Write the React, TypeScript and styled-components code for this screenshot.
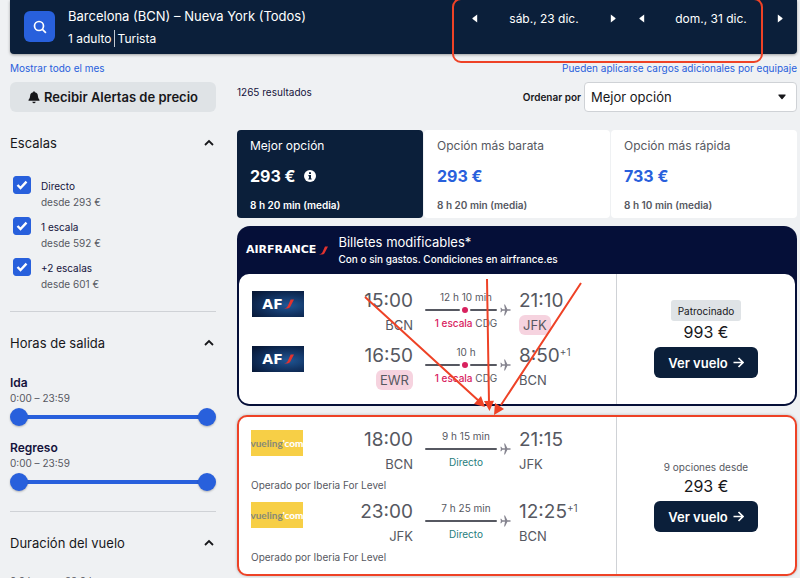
import React, { useState } from "react";
import styled, { createGlobalStyle, css } from "styled-components";

const color = {
  page: "#eff1f3",
  navy: "#0b1f3a",
  partner: "#050f38",
  blue: "#2860dc",
  ink: "#17171a",
  indigo: "#15133c",
  text: "#565861",
  pink: "#d8215e",
  blush: "#f6d3df",
  teal: "#1f7d7d",
  chip: "#dfe3e6",
  line: "#cfd2d6",
  mark: "#ee4226",
};

const GlobalStyle = createGlobalStyle`
  *, *::before, *::after { box-sizing: border-box; }
  body {
    margin: 0;
    background: ${color.page};
    color: ${color.ink};
    font-family: Inter, "Liberation Sans", sans-serif;
    font-size: 10px;
    line-height: 16px;
  }
  button, input, select { font: inherit; color: inherit; margin: 0; }
  h1, h2, h3, p, ul, fieldset { margin: 0; padding: 0; border: 0; list-style: none; font-weight: 400; }
`;

const Page = styled.div`
  position: relative;
  height: 100vh;
  overflow: hidden;
  padding: 0 3px 0 10px;
`;

const SearchBar = styled.header`
  display: flex;
  justify-content: space-between;
  height: 54px;
  padding: 0 12px 0 14px;
  background: ${color.navy};
  color: #fff;
  border-radius: 0 0 4px 4px;
  box-shadow: 0 1px 3px rgba(0, 0, 0, 0.35);
`;

const SearchSummary = styled.div`
  display: flex;
  gap: 13px;
`;

const SearchButton = styled.button`
  display: grid;
  place-items: center;
  width: 31px;
  height: 31px;
  margin-top: 11px;
  padding: 0;
  border: 0;
  border-radius: 6px;
  background: ${color.blue};
  color: #fff;
`;

const Route = styled.h1`
  margin-top: 6px;
  font-size: 13px;
  line-height: 20px;
`;

const Passengers = styled.p`
  display: flex;
  margin-top: 4px;
  font-size: 12px;
  line-height: 17px;
`;

const Cabin = styled.span`
  margin-left: 2px;
  padding-left: 3px;
  border-left: 1px solid #c4cad3;
`;

const Dates = styled.div`
  position: relative;
  display: flex;
  gap: 19px;
  height: 37px;
`;

const DateStepper = styled.div`
  display: flex;
  align-items: center;
  justify-content: space-between;
  width: 148px;
  font-size: 12px;
`;

const StepButton = styled.button`
  display: grid;
  place-items: center;
  width: 10px;
  height: 20px;
  padding: 0;
  border: 0;
  background: none;
  color: #fff;
`;

const DatesHighlight = styled.div`
  position: absolute;
  top: -2px;
  left: -18px;
  right: 22px;
  height: 65px;
  border: 2px solid ${color.mark};
  border-radius: 9px;
  pointer-events: none;
`;

const Links = styled.nav`
  display: flex;
  justify-content: space-between;
  padding: 6px 0;
`;

const TextLink = styled.a`
  color: ${color.blue};
  text-decoration: none;
`;

const Columns = styled.div`
  display: grid;
  grid-template-columns: 206px minmax(0, 1fr);
  column-gap: 21px;
  align-items: start;
`;

const AlertButton = styled.button`
  display: flex;
  align-items: center;
  justify-content: center;
  gap: 4px;
  width: 100%;
  height: 30px;
  border: 0;
  border-radius: 6px;
  background: ${color.chip};
  font-size: 13px;
  font-weight: 600;
  white-space: nowrap;
`;

const FilterSection = styled.section`
  padding: 21px 0 20px;
  border-bottom: 1px solid ${color.line};
`;

const FilterToggle = styled.button`
  display: flex;
  align-items: center;
  justify-content: space-between;
  width: 100%;
  padding: 0 2px 0 0;
  border: 0;
  background: none;
  font-size: 13px;
  line-height: 20px;
  text-align: left;
`;

const StopList = styled.ul`
  padding: 23px 0 0 3px;
  margin-bottom: -8px;
`;

const StopItem = styled.li`
  display: grid;
  grid-template-columns: 18px 1fr;
  column-gap: 10px;
  height: 41px;
`;

const CheckCell = styled.span`
  display: grid;
  width: 18px;
  height: 18px;
  > * { grid-area: 1 / 1; }
  svg { place-self: center; pointer-events: none; }
`;

const Check = styled.input`
  appearance: none;
  width: 18px;
  height: 18px;
  border: 1px solid ${color.blue};
  border-radius: 3px;
  background: #fff;
  &:checked { background: ${color.blue}; }
`;

const StopLabel = styled.label`
  padding-top: 2px;
  color: ${color.indigo};
`;

const Muted = styled.span`
  display: block;
  color: ${color.text};
`;

const RangeGroup = styled.fieldset`
  padding: 22px 0 0;
  & + & { padding-top: 14px; }
  legend { float: left; width: 100%; padding: 0; color: ${color.indigo}; font-size: 12px; font-weight: 600; line-height: 16px; }
`;

const RangeText = styled.p`
  clear: both;
  color: ${color.text};
  line-height: 15px;
`;

const RangeTrack = styled.div`
  display: grid;
  align-items: center;
  height: 18px;
  margin-top: 2px;
  background: linear-gradient(${color.blue}, ${color.blue}) center / calc(100% - 18px) 4px no-repeat;
`;

const RangeInput = styled.input`
  grid-area: 1 / 1;
  appearance: none;
  width: 100%;
  height: 18px;
  background: none;
  pointer-events: none;
  &::-webkit-slider-thumb {
    appearance: none;
    width: 18px;
    height: 18px;
    border-radius: 50%;
    background: ${color.blue};
    box-shadow: 0 1px 2px rgba(0, 0, 0, 0.25);
    pointer-events: auto;
  }
`;

const DurationText = styled.p`
  padding-top: 20px;
  color: ${color.text};
`;

const Toolbar = styled.div`
  display: flex;
  justify-content: space-between;
  margin-bottom: 18px;
`;

const ResultCount = styled.p`
  padding-top: 2px;
  color: ${color.indigo};
`;

const Sorting = styled.div`
  display: flex;
  align-items: center;
  gap: 3px;
  label { font-weight: 600; }
`;

const SelectBox = styled.div`
  display: grid;
  align-items: center;
  width: 213px;
  > * { grid-area: 1 / 1; }
  svg { justify-self: end; margin-right: 11px; pointer-events: none; }
`;

const Select = styled.select`
  appearance: none;
  width: 100%;
  height: 30px;
  padding: 0 6px;
  border: 1px solid ${color.line};
  border-radius: 4px;
  background: #fff;
  font-size: 13px;
`;

const Tabs = styled.div`
  display: grid;
  grid-template-columns: repeat(3, minmax(0, 1fr));
  column-gap: 1px;
  margin-bottom: 8px;
`;

const Tab = styled.button<{ $active?: boolean }>`
  height: 88px;
  padding: 6px 13px 5px;
  border: 0;
  border-radius: 4px;
  background: ${(p) => (p.$active ? color.navy : "#fff")};
  color: ${(p) => (p.$active ? "#fff" : color.text)};
  text-align: left;
`;

const TabName = styled.span`
  display: block;
  font-size: 12px;
  line-height: 20px;
`;

const TabPrice = styled.span<{ $active?: boolean }>`
  display: flex;
  align-items: center;
  gap: 8px;
  padding: 9px 0 10px;
  color: ${(p) => (p.$active ? "#fff" : color.blue)};
  font-size: 16px;
  font-weight: 700;
  line-height: 22px;
`;

const TabTime = styled.span`
  display: block;
  font-size: 10px;
  font-weight: 600;
  line-height: 16px;
`;

const PartnerCard = styled.article`
  padding: 0 2px 2px;
  border-radius: 13px;
  background: ${color.partner};
  margin-bottom: 9px;
`;

const PartnerHeader = styled.div`
  display: flex;
  align-items: center;
  gap: 10px;
  height: 48px;
  padding: 0 7px;
  color: #fff;
`;

const PartnerBrand = styled.span`
  display: flex;
  align-items: center;
  gap: 3px;
  font: 700 11px/16px "DejaVu Sans", sans-serif;
`;

const PartnerTitle = styled.h2`
  font-size: 13px;
  line-height: 18px;
`;

const PartnerNote = styled.p`
  font-size: 10px;
  font-weight: 500;
`;

const FlightCard = styled.article<{ $marked?: boolean }>`
  display: grid;
  grid-template-columns: minmax(0, 1fr) 178px;
  background: #fff;
  border-radius: 10px;
  ${(p) =>
    p.$marked &&
    css`
      border: 2px solid ${color.mark};
      box-shadow: 0 0 3px rgba(0, 0, 0, 0.25);
    `}
`;

const Legs = styled.div<{ $compact?: boolean }>`
  display: grid;
  row-gap: ${(p) => (p.$compact ? 7 : 9)}px;
  padding: ${(p) => (p.$compact ? "11px 12px 9px" : "15px 12px 14px 13px")};
  border-right: 1px solid ${color.line};
`;

const LegRow = styled.div`
  display: grid;
  grid-template-columns: 52px minmax(0, 1fr) 86px 93px;
`;

const Stop = styled.div<{ $end?: boolean }>`
  display: flex;
  flex-direction: column;
  align-items: ${(p) => (p.$end ? "flex-end" : "flex-start")};
  padding: ${(p) => (p.$end ? "0 12px 0 0" : "0 0 0 8px")};
`;

const Time = styled.span`
  display: flex;
  color: ${color.text};
  font-size: 19px;
  line-height: 24px;
  sup { font-size: 10px; line-height: 16px; }
`;

const Airport = styled.span<{ $changed?: boolean }>`
  color: ${color.text};
  font-size: 13px;
  line-height: 20px;
  margin-top: 2px;
  ${(p) =>
    p.$changed &&
    css`
      padding: 0 4px;
      border-radius: 6px;
      background: ${color.blush};
    `}
`;

const Path = styled.div`
  display: flex;
  flex-direction: column;
  color: ${color.text};
  font-size: 10px;
`;

const PathText = styled.span<{ $direct?: boolean }>`
  width: 82px;
  text-align: center;
  line-height: 16px;
  white-space: nowrap;
  color: ${(p) => (p.$direct ? color.teal : color.text)};
  em { color: ${color.pink}; font-style: normal; font-weight: 500; }
`;

const PathLine = styled.div`
  display: flex;
  align-items: center;
  gap: 3px;
  height: 10px;
`;

const Stroke = styled.span`
  flex: 1;
  height: 2px;
  border-radius: 1px;
  background: ${color.text};
`;

const Dot = styled.span`
  width: 6px;
  height: 6px;
  border-radius: 50%;
  background: ${color.pink};
`;

const Track = styled.span`
  display: flex;
  flex: 1;
  align-items: center;
  gap: 2px;
`;

const ShortStroke = styled(Stroke)`
  flex: 0 0 27px;
`;

const Operator = styled.p`
  grid-column: 1 / -1;
  padding-top: 3px;
  font-size: 10px;
  color: ${color.text};
`;

const LogoCell = styled.div`
  padding-top: 2px;
`;

const AirlineTile = styled.div<{ $brand: "af" | "vueling" }>`
  display: flex;
  align-items: center;
  justify-content: center;
  gap: 1px;
  height: 26px;
  overflow: hidden;
  white-space: nowrap;
  ${(p) =>
    p.$brand === "af"
      ? css`
          background: radial-gradient(ellipse at 68% 55%, #205796 0%, #123464 45%, #071837 90%);
          color: #fff;
          font: 700 14px/16px "DejaVu Sans", sans-serif;
        `
      : css`
          background: #f7cf46;
          color: #878a78;
          font: 700 10px/16px Lato, sans-serif;
          gap: 0;
          b { color: #fff; }
        `}
`;

const Offer = styled.div`
  display: flex;
  flex-direction: column;
  align-items: center;
  justify-content: center;
`;

const Badge = styled.span`
  padding: 3px 7px 2px;
  border-radius: 3px;
  background: ${color.chip};
  font-size: 10px;
`;

const OfferNote = styled.span`
  color: ${color.text};
  font-size: 10px;
`;

const OfferPrice = styled.span`
  margin-bottom: 4px;
  font-size: 16px;
  line-height: 22px;
`;

const ViewButton = styled.button`
  display: flex;
  align-items: center;
  gap: 5px;
  height: 31px;
  padding: 0 14px;
  border: 0;
  border-radius: 6px;
  background: ${color.navy};
  color: #fff;
  font-size: 13px;
  font-weight: 600;
  white-space: nowrap;
`;

const ArrowLayer = styled.svg`
  position: absolute;
  top: 0;
  left: 0;
  pointer-events: none;
`;

const Triangle = ({ dir }: { dir: "left" | "right" }) => (
  <svg width="6" height="9" viewBox="0 0 6 9" fill="currentColor" aria-hidden="true">
    <path d={dir === "left" ? "M5.2 .5v8L.6 4.9q-.4-.4 0-.8z" : "M.8 .5v8l4.600-3.600q.4-.4 0-.8z"} />
  </svg>
);

const Chevron = () => (
  <svg width="10" height="8" viewBox="0 0 10 8" fill="none" stroke="currentColor" strokeWidth="1.8" aria-hidden="true">
    <path d="M1 6l4-4 4 4" />
  </svg>
);

const Plane = () => (
  <svg width="11" height="12" viewBox="0 0 11 12" fill="#85848f" aria-hidden="true">
    <path d="M4.100 .6h.9l2.400 4.700h2.200q1.200.1 1.300.7-.1.600-1.300.7H7.400L5 11.400h-.9l.9-4.700H2.400L1.200 8.300H.4L.9 6 .4 3.700h.8l1.200 1.600H5z" />
  </svg>
);

const Slash = ({ size }: { size: number }) => (
  <svg width={size} height={size} viewBox="0 0 9 9" fill="#e2332f" aria-hidden="true">
    <path d="M0 8.500Q2.500 8 3.300 6.500L6 .5h3L5.500 7.200Q4.700 8.500 3 8.500z" />
  </svg>
);

interface Leg {
  depart: string;
  from: string;
  arrive: string;
  to: string;
  duration: string;
  via?: string;
  nextDay?: boolean;
  fromChanged?: boolean;
  toChanged?: boolean;
  operator?: string;
}

function LegView({ leg, brand }: { leg: Leg; brand: "af" | "vueling" }) {
  return (
    <LegRow>
      <LogoCell>
        {brand === "af" ? (
          <AirlineTile $brand="af">AF<Slash size={10} /></AirlineTile>
        ) : (
          <AirlineTile $brand="vueling">vueling<b>'com</b></AirlineTile>
        )}
      </LogoCell>
      <Stop $end>
        <Time>{leg.depart}</Time>
        <Airport $changed={leg.fromChanged}>{leg.from}</Airport>
      </Stop>
      <Path>
        <PathText>{leg.duration}</PathText>
        <PathLine>
          <Track>
            <Stroke />
            {leg.via && <><Dot /><ShortStroke /></>}
          </Track>
          <Plane />
        </PathLine>
        {leg.via ? (
          <PathText><em>1 escala</em> {leg.via}</PathText>
        ) : (
          <PathText $direct>Directo</PathText>
        )}
      </Path>
      <Stop>
        <Time>{leg.arrive}{leg.nextDay && <sup>+1</sup>}</Time>
        <Airport $changed={leg.toChanged}>{leg.to}</Airport>
      </Stop>
      {leg.operator && <Operator>{leg.operator}</Operator>}
    </LegRow>
  );
}

const partnerLegs: Leg[] = [
  { depart: "15:00", from: "BCN", arrive: "21:10", to: "JFK", duration: "12 h 10 min", via: "CDG", toChanged: true },
  { depart: "16:50", from: "EWR", arrive: "8:50", to: "BCN", duration: "10 h", via: "CDG", nextDay: true, fromChanged: true },
];

const vuelingLegs: Leg[] = [
  { depart: "18:00", from: "BCN", arrive: "21:15", to: "JFK", duration: "9 h 15 min", operator: "Operado por Iberia For Level" },
  { depart: "23:00", from: "JFK", arrive: "12:25", to: "BCN", duration: "7 h 25 min", nextDay: true, operator: "Operado por Iberia For Level" },
];

const stops = [
  { id: "direct", name: "Directo", price: "desde 293 €" },
  { id: "one", name: "1 escala", price: "desde 592 €" },
  { id: "two", name: "+2 escalas", price: "desde 601 €" },
];

const options = [
  { name: "Mejor opción", price: "293 €", time: "8 h 20 min (media)" },
  { name: "Opción más barata", price: "293 €", time: "8 h 20 min (media)" },
  { name: "Opción más rápida", price: "733 €", time: "8 h 10 min (media)" },
];

function DateControl({ label }: { label: string }) {
  return (
    <DateStepper>
      <StepButton aria-label="Día anterior"><Triangle dir="left" /></StepButton>
      <span>{label}</span>
      <StepButton aria-label="Día siguiente"><Triangle dir="right" /></StepButton>
    </DateStepper>
  );
}

function HoursRange({ name }: { name: string }) {
  return (
    <RangeGroup>
      <legend>{name}</legend>
      <RangeText>0:00 – 23:59</RangeText>
      <RangeTrack>
        <RangeInput type="range" min={0} max={1439} defaultValue={0} aria-label={`${name}: desde`} />
        <RangeInput type="range" min={0} max={1439} defaultValue={1439} aria-label={`${name}: hasta`} />
      </RangeTrack>
    </RangeGroup>
  );
}

function OfferAction() {
  return (
    <ViewButton>
      Ver vuelo
      <svg width="11" height="11" viewBox="0 0 11 11" fill="none" stroke="currentColor" strokeWidth="1.700" aria-hidden="true">
        <path d="M.5 5.500h9M5.500 1l4.500 4.500L5.500 10" />
      </svg>
    </ViewButton>
  );
}

export default function App() {
  const [active, setActive] = useState(0);
  return (
    <Page>
      <GlobalStyle />
      <SearchBar>
        <SearchSummary>
          <SearchButton aria-label="Buscar">
            <svg width="14" height="14" viewBox="0 0 14 14" fill="none" stroke="currentColor" strokeWidth="1.700" aria-hidden="true">
              <circle cx="6" cy="6" r="4.500" />
              <path d="M9.200 9.200l3.700 3.700" />
            </svg>
          </SearchButton>
          <div>
            <Route>Barcelona (BCN) – Nueva York (Todos)</Route>
            <Passengers>1 adulto<Cabin>Turista</Cabin></Passengers>
          </div>
        </SearchSummary>
        <Dates>
          <DateControl label="sáb., 23 dic." />
          <DateControl label="dom., 31 dic." />
          <DatesHighlight />
        </Dates>
      </SearchBar>
      <Links>
        <TextLink href="#mes">Mostrar todo el mes</TextLink>
        <TextLink href="#equipaje">Pueden aplicarse cargos adicionales por equipaje</TextLink>
      </Links>
      <Columns>
        <aside>
          <AlertButton>
            <svg width="12" height="13" viewBox="0 0 12 13" fill="currentColor" aria-hidden="true">
              <path d="M6 .3q.8 0 .9.9Q9.800 1.800 9.900 5q.1 2.600 1.500 3.700.6.8-.3 1.100H.9q-.9-.3-.3-1.100Q2 7.600 2.100 5q.1-3.200 3-3.800Q5.200.3 6 .3zM4.300 10.700h3.400Q7.400 12.300 6 12.300t-1.700-1.600z" />
            </svg>
            Recibir Alertas de precio
          </AlertButton>
          <FilterSection>
            <FilterToggle aria-expanded>Escalas<Chevron /></FilterToggle>
            <StopList>
              {stops.map((s) => (
                <StopItem key={s.id}>
                  <CheckCell>
                    <Check type="checkbox" id={s.id} defaultChecked />
                    <svg width="12" height="10" viewBox="0 0 12 10" fill="none" stroke="#fff" strokeWidth="2.400" aria-hidden="true">
                      <path d="M1.500 5l3 3 6-6.300" />
                    </svg>
                  </CheckCell>
                  <StopLabel htmlFor={s.id}>{s.name}<Muted>{s.price}</Muted></StopLabel>
                </StopItem>
              ))}
            </StopList>
          </FilterSection>
          <FilterSection>
            <FilterToggle aria-expanded>Horas de salida<Chevron /></FilterToggle>
            <HoursRange name="Ida" />
            <HoursRange name="Regreso" />
          </FilterSection>
          <FilterSection>
            <FilterToggle aria-expanded>Duración del vuelo<Chevron /></FilterToggle>
            <DurationText>0,0 horas – 22,0 h</DurationText>
          </FilterSection>
        </aside>
        <main>
          <Toolbar>
            <ResultCount>1265 resultados</ResultCount>
            <Sorting>
              <label htmlFor="sort">Ordenar por</label>
              <SelectBox>
                <Select id="sort" defaultValue="Mejor opción">
                  {options.map((o) => <option key={o.name}>{o.name}</option>)}
                </Select>
                <svg width="8" height="6" viewBox="0 0 8 6" fill="currentColor" aria-hidden="true">
                  <path d="M.8.500h6.400q.8.300.3.900L4.500 5q-.5.500-1 0L.500 1.400Q0 .8.800.5z" />
                </svg>
              </SelectBox>
            </Sorting>
          </Toolbar>
          <Tabs>
            {options.map((o, i) => (
              <Tab key={o.name} $active={i === active} onClick={() => setActive(i)}>
                <TabName>{o.name}</TabName>
                <TabPrice $active={i === active}>
                  {o.price}
                  {i === active && (
                    <svg width="12" height="12" viewBox="0 0 12 12" aria-hidden="true">
                      <circle cx="6" cy="6" r="6" fill="#fff" />
                      <path d="M5 2.300h2v1.800H5zM4.400 5H7v3.400h.7v1.200H4.300V8.400H5V6.200h-.6z" fill={color.navy} />
                    </svg>
                  )}
                </TabPrice>
                <TabTime>{o.time}</TabTime>
              </Tab>
            ))}
          </Tabs>
          <PartnerCard>
            <PartnerHeader>
              <PartnerBrand>AIRFRANCE<Slash size={9} /></PartnerBrand>
              <div>
                <PartnerTitle>Billetes modificables*</PartnerTitle>
                <PartnerNote>Con o sin gastos. Condiciones en airfrance.es</PartnerNote>
              </div>
            </PartnerHeader>
            <FlightCard>
              <Legs>
                {partnerLegs.map((leg) => <LegView key={leg.depart} leg={leg} brand="af" />)}
              </Legs>
              <Offer>
                <Badge>Patrocinado</Badge>
                <OfferPrice>993 €</OfferPrice>
                <OfferAction />
              </Offer>
            </FlightCard>
          </PartnerCard>
          <FlightCard $marked>
            <Legs $compact>
              {vuelingLegs.map((leg) => <LegView key={leg.depart} leg={leg} brand="vueling" />)}
            </Legs>
            <Offer>
              <OfferNote>9 opciones desde</OfferNote>
              <OfferPrice>293 €</OfferPrice>
              <OfferAction />
            </Offer>
          </FlightCard>
        </main>
      </Columns>
      <ArrowLayer width="800" height="578" viewBox="0 0 800 578" aria-hidden="true">
        <g stroke={color.mark} strokeWidth="2" fill="none">
          <path d="M365 297L480 402M487 279l2 124M581 283l-80 122" />
        </g>
        <g fill={color.mark}>
          <path d="M485 407l-11-3 7-8zM489.500 411l-5.500-10 10-.3zM494 415l1-12 9 6z" />
        </g>
      </ArrowLayer>
    </Page>
  );
}
